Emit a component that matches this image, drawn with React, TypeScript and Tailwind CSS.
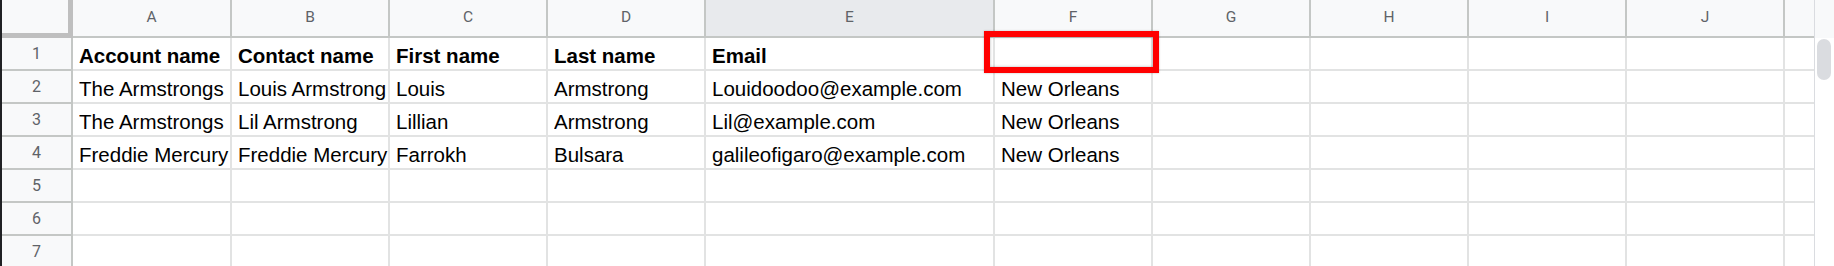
const columns = [
  { key: 'A', width: 'w-[159px]' },
  { key: 'B', width: 'w-[158px]' },
  { key: 'C', width: 'w-[158px]' },
  { key: 'D', width: 'w-[158px]' },
  { key: 'E', width: 'w-[289px]' },
  { key: 'F', width: 'w-[158px]' },
  { key: 'G', width: 'w-[158px]' },
  { key: 'H', width: 'w-[158px]' },
  { key: 'I', width: 'w-[158px]' },
  { key: 'J', width: 'w-[158px]' },
];

const rows: string[][] = [
  ['Account name', 'Contact name', 'First name', 'Last name', 'Email', '', '', '', '', ''],
  ['The Armstrongs', 'Louis Armstrong', 'Louis', 'Armstrong', 'Louidoodoo@example.com', 'New Orleans', '', '', '', ''],
  ['The Armstrongs', 'Lil Armstrong', 'Lillian', 'Armstrong', 'Lil@example.com', 'New Orleans', '', '', '', ''],
  ['Freddie Mercury', 'Freddie Mercury', 'Farrokh', 'Bulsara', 'galileofigaro@example.com', 'New Orleans', '', '', '', ''],
  ['', '', '', '', '', '', '', '', '', ''],
  ['', '', '', '', '', '', '', '', '', ''],
  ['', '', '', '', '', '', '', '', '', ''],
];

function ColumnHeader() {
  return (
    <div className="flex h-[38px] shrink-0">
      {/* corner */}
      <div className="w-[71px] shrink-0 bg-[#f8f9fa] border-r-[5px] border-b-[5px] border-[#bfbfbf]" />
      {columns.map((col) => (
        <div
          key={col.key}
          className={`${col.width} shrink-0 flex items-center justify-center border-r-2 border-b-2 border-[#c4c7c5] font-['Roboto'] text-[15.5px] text-[#5f6368] ${
            col.key === 'E' ? 'bg-[#e8eaed]' : 'bg-[#f8f9fa]'
          }`}
        >
          {col.key}
        </div>
      ))}
      <div className="flex-1 bg-[#f8f9fa] border-b-2 border-[#c4c7c5]" />
      <div className="w-[20px] shrink-0 bg-[#f8f9fa] border-l border-[#dadce0]" />
    </div>
  );
}

function SheetRow({ index, cells }: { index: number; cells: string[] }) {
  const bold = index === 0;
  return (
    <div className="flex h-[33px] shrink-0">
      <div className="w-[71px] shrink-0 flex items-center justify-center bg-[#f8f9fa] border-r-2 border-b-2 border-[#c4c7c5] font-['Roboto'] text-[16px] text-[#5f6368]">
        {index + 1}
      </div>
      {columns.map((col, i) => (
        <div
          key={col.key}
          className={`${col.width} shrink-0 relative flex items-end pb-[2px] pl-[6px] border-r-2 border-b-2 border-[#e2e3e3] overflow-visible`}
        >
          <span
            className={`block w-full overflow-hidden whitespace-nowrap leading-[23px] text-[20.5px] text-black ${
              bold ? 'font-bold' : ''
            }`}
          >
            {cells[i]}
          </span>
          {/* highlighted empty header cell */}
          {index === 0 && col.key === 'F' && (
            <div className="absolute -left-[11px] -top-[7px] z-10 w-[175px] h-[42px] border-[6.5px] border-[#ff0000] shadow-[inset_0_0_3px_rgba(0,0,0,0.3),0_0_2px_rgba(0,0,0,0.25)]" />
          )}
        </div>
      ))}
      <div className="flex-1 border-b-2 border-[#e2e3e3]" />
    </div>
  );
}

export default function App() {
  return (
    <div className="w-[1834px] h-[266px] overflow-hidden bg-white flex font-['Liberation_Sans',Arial,sans-serif]">
      <div className="w-[2px] shrink-0 bg-[#202124]" />
      <div className="flex-1 flex flex-col">
        <ColumnHeader />
        <div className="flex flex-1">
          <div className="flex-1 flex flex-col">
            {rows.map((cells, i) => (
              <SheetRow key={i} index={i} cells={cells} />
            ))}
          </div>
          {/* vertical scrollbar */}
          <div className="w-[20px] shrink-0 bg-white border-l border-[#dadce0] pl-[2px] pt-[1px]">
            <div className="w-[14px] h-[41px] rounded-full bg-[#dadce0]" />
          </div>
        </div>
      </div>
    </div>
  );
}
